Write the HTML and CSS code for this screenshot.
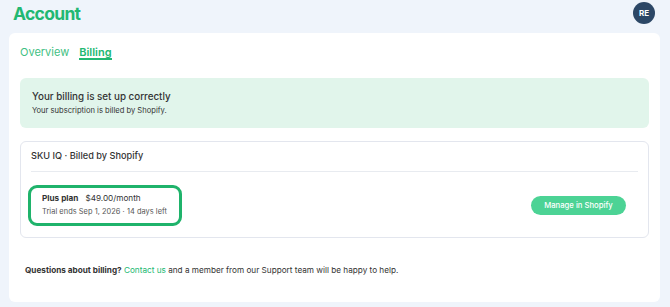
FILE: index.html
```html
<!DOCTYPE html>
<html lang="en">
<head>
  <meta charset="UTF-8" />
  <title>Account</title>
  <meta name="viewport" content="width=device-width, initial-scale=1.0" />
  <link rel="stylesheet" href="styles.css">
</head>
<body>
  <header class="topbar">
    <h1>Account</h1>
    <div class="avatar">RE</div>
  </header>

  <main class="card">
    <nav class="tabs">
      <a class="tab">Overview</a>
      <a class="tab active">Billing</a>
    </nav>

    <div class="alert">
      <div class="alert-title">Your billing is set up correctly</div>
      <div class="alert-text">Your subscription is billed by Shopify.</div>
    </div>

    <div class="plan-card">
      <div class="plan-head">SKU IQ · Billed by Shopify</div>
      <div class="plan-row">
        <div class="plan-box">
          <div class="plan-name"><strong>Plus plan</strong><span class="price">$49.00/month</span></div>
          <div class="trial">Trial ends Sep 1, 2026 · 14 days left</div>
        </div>
        <button class="manage-btn">Manage in Shopify</button>
      </div>
    </div>

    <p class="help"><strong>Questions about billing?</strong> <a class="link">Contact us</a> and a member from our Support team will be happy to help.</p>
  </main>
</body>
</html>
```

FILE: styles.css
```css
body {
  font-family: 'Inter', sans-serif;
  margin: 0;
  background: #eff4fb;
  color: #333;
  padding: 0 10px 5px 9px;
}

.topbar {
  display: flex;
  justify-content: space-between;
  align-items: center;
  height: 33px;
  padding-left: 4px;
}

h1 {
  margin: 0;
  font-size: 17.5px;
  font-weight: 700;
  letter-spacing: -0.7px;
  color: #22b872;
  line-height: 1;
  margin-top: -6px;
}

.avatar {
  width: 22px;
  height: 22px;
  border-radius: 50%;
  background: #2c4766;
  color: #fff;
  font-size: 8px;
  font-weight: 700;
  display: flex;
  align-items: center;
  justify-content: center;
  margin-top: -7px;
  margin-right: 5px;
}

.card {
  background: #fff;
  border-radius: 6px;
  padding: 10px 11px 0 11px;
  height: 259px;
}

.tabs {
  display: flex;
  gap: 10px;
  height: 35px;
}

.tab {
  font-size: 11px;
  color: #3fbf83;
  height: 17px;
  padding-top: 2px;
  box-sizing: border-box;
}

.tab.active {
  font-weight: 600;
  color: #22b872;
  border-bottom: 2px solid #22b872;
}

.alert {
  background: #e1f5eb;
  border-radius: 6px;
  height: 50px;
  padding: 0 12px;
  box-sizing: border-box;
  display: flex;
  flex-direction: column;
  justify-content: center;
  gap: 4px;
}

.alert-title {
  font-size: 9.8px;
  font-weight: 500;
  color: #333;
}

.alert-text {
  font-size: 7.6px;
  color: #333;
}

.plan-card {
  margin-top: 13px;
  border: 1px solid #e3e6ee;
  border-radius: 6px;
  height: 97px;
  box-sizing: border-box;
  padding: 0 10px;
}

.plan-head {
  font-size: 9.2px;
  font-weight: 500;
  height: 29px;
  line-height: 28px;
  border-bottom: 1px solid #e8ebf0;
}

.plan-row {
  display: flex;
  justify-content: space-between;
  align-items: center;
  margin-top: 13px;
  margin-left: -3px;
}

.plan-box {
  border: 3px solid #1fb36b;
  border-radius: 9px;
  width: 154px;
  height: 41px;
  box-sizing: border-box;
  padding: 4px 11px;
  line-height: 13px;
  white-space: nowrap;
}

.plan-name {
  font-size: 8.2px;
}

.plan-name strong {
  font-weight: 700;
}

.price {
  margin-left: 7px;
}

.trial {
  font-size: 7.4px;
  letter-spacing: 0.05px;
  color: #555;
}

.manage-btn {
  background: #4cd395;
  color: #fff;
  border: none;
  border-radius: 10px;
  width: 95px;
  height: 19px;
  font-family: 'Inter', sans-serif;
  font-size: 7.7px;
  font-weight: 500;
  margin-right: 12px;
  padding: 0;
}

.help {
  font-size: 8.2px;
  margin: 27px 0 0 5px;
  color: #333;
}

.link {
  color: #22b872;
}
```
